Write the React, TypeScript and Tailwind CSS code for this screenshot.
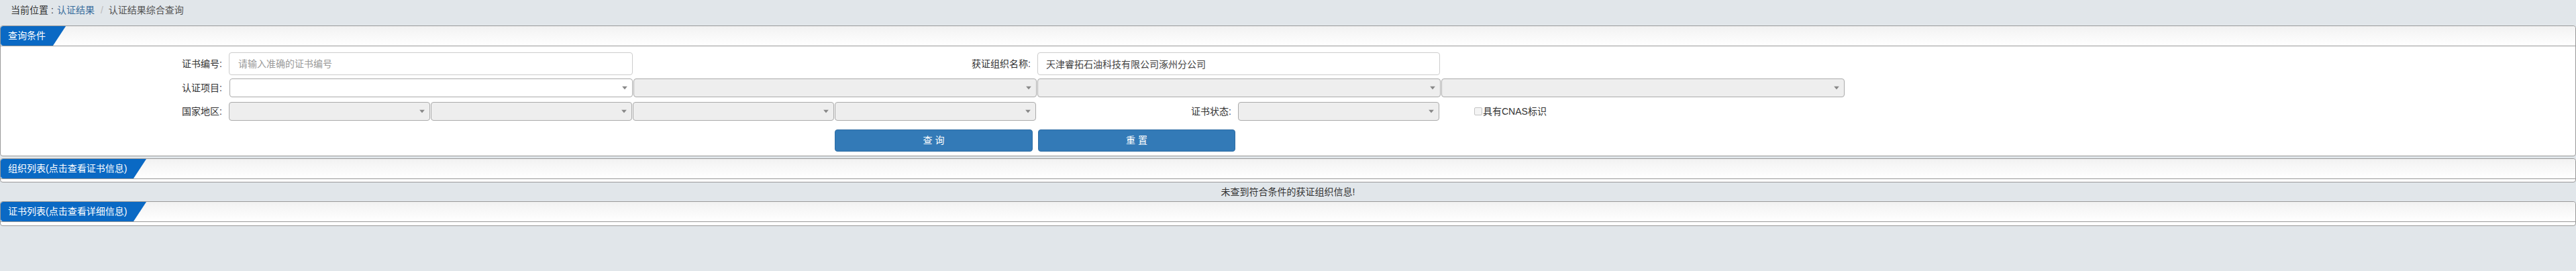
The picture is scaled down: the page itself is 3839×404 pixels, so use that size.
import React from "react";

const font = "font-['Liberation_Sans','Noto_Sans_CJK_SC',sans-serif]";

function Arrow() {
  return (
    <svg
      width="8"
      height="5"
      viewBox="0 0 8 5"
      className="absolute right-[8px] top-1/2 -translate-y-1/2 pointer-events-none"
    >
      <path d="M0 0 L8 0 L4 5 Z" fill="#888" />
    </svg>
  );
}

function Select({ width, enabled = false }: { width: string; enabled?: boolean }) {
  return (
    <div className={`relative h-full ${width}`}>
      <select
        disabled={!enabled}
        className={`appearance-none w-full h-full rounded-[4px] border border-[#aaa] outline-none ${
          enabled ? "bg-white" : "bg-[#eeeeee]"
        }`}
      />
      <Arrow />
    </div>
  );
}

function Label({ width, children }: { width: string; children: React.ReactNode }) {
  return (
    <div className={`${width} shrink-0 pr-[10px] text-right text-[14px] text-[#333]`}>{children}</div>
  );
}

function PanelHeader({ title, tabWidth }: { title: string; tabWidth: string }) {
  return (
    <div className="h-[30px] border-b border-[#999] bg-gradient-to-b from-[#f2f2f2] to-white rounded-t-[4px] flex">
      <div
        className={`${tabWidth} h-full bg-[#0a69c4] rounded-l-[4px] text-white text-[14px] pl-[11px] flex items-center [clip-path:polygon(0_0,100%_0,calc(100%-19px)_100%,0_100%)]`}
      >
        {title}
      </div>
    </div>
  );
}

export default function App() {
  return (
    <div className={`min-h-screen bg-[#e1e6ea] ${font}`}>
      {/* breadcrumb */}
      <div className="h-[38px] pl-[16px] pt-[6px] text-[14px] leading-[18px] flex">
        <span className="text-[#333]">当前位置</span>
        <span className="text-[#333] ml-[4px]">:</span>
        <span className="text-[#3b6e9d] ml-[5px]">认证结果</span>
        <span className="text-[#bbb] ml-[9px]">/</span>
        <span className="text-[#555] ml-[8px]">认证结果综合查询</span>
      </div>

      {/* 查询条件 */}
      <div className="border border-[#999] rounded-[4px] bg-white">
        <PanelHeader title="查询条件" tabWidth="w-[97px]" />
        <div className="pt-[9px] pb-[6px]">
          <div className="flex items-center h-[34px]">
            <Label width="w-[340px]">证书编号:</Label>
            <input
              placeholder="请输入准确的证书编号"
              className="w-[602px] h-full rounded-[4px] border border-[#ccc] px-[13px] text-[14px] text-[#444] placeholder:text-[#999] outline-none"
            />
            <Label width="w-[603px]">获证组织名称:</Label>
            <input
              defaultValue="天津睿拓石油科技有限公司涿州分公司"
              className="w-[600px] h-full rounded-[4px] border border-[#ccc] px-[12px] text-[14px] text-[#444] outline-none"
            />
          </div>

          <div className="flex items-center h-[28px] mt-[5px] gap-[1px]">
            <Label width="w-[340px]">认证项目:</Label>
            <Select width="w-[601px]" enabled />
            <Select width="w-[601px]" />
            <Select width="w-[601px]" />
            <Select width="w-[601px]" />
          </div>

          <div className="flex items-center h-[28px] mt-[7px]">
            <Label width="w-[340px]">国家地区:</Label>
            <div className="flex h-full gap-[1px]">
              <Select width="w-[300px]" />
              <Select width="w-[300px]" />
              <Select width="w-[300px]" />
              <Select width="w-[300px]" />
            </div>
            <Label width="w-[301px]">证书状态:</Label>
            <Select width="w-[300px]" />
            <label className="flex items-center ml-[52px] text-[14px] text-[#333]">
              <span className="w-[12px] h-[12px] border border-[#c4c4c4] bg-[#f4f4f4] rounded-[2px] mr-[1px]" />
              具有CNAS标识
            </label>
          </div>

          <div className="flex h-[33px] mt-[13px] pl-[1243px] gap-[8px]">
            <button className="w-[295px] h-full rounded-[4px] bg-[#337ab7] border border-[#2e6da4] text-white text-[14px]">
              查 询
            </button>
            <button className="w-[294px] h-full rounded-[4px] bg-[#337ab7] border border-[#2e6da4] text-white text-[14px]">
              重 置
            </button>
          </div>
        </div>
      </div>

      {/* 组织列表 */}
      <div className="mt-[3px] border border-[#999] rounded-[4px] bg-white">
        <PanelHeader title="组织列表(点击查看证书信息)" tabWidth="w-[217px]" />
        <div className="h-[4px]" />
      </div>

      <div className="h-[28px] flex items-center justify-center text-[14px] text-[#333]">
        未查到符合条件的获证组织信息!
      </div>

      {/* 证书列表 */}
      <div className="border border-[#999] rounded-[4px] bg-white">
        <PanelHeader title="证书列表(点击查看详细信息)" tabWidth="w-[217px]" />
        <div className="h-[5px]" />
      </div>
    </div>
  );
}
